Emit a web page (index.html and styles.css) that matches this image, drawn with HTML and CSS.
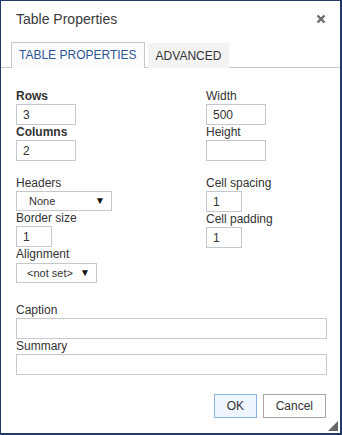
FILE: index.html
```html
<!DOCTYPE html>
<html lang="en">
<head>
  <meta charset="UTF-8">
  <title>Table Properties</title>
  <link rel="stylesheet" href="styles.css">
</head>
<body>
  <div class="dialog">
    <div class="head">
      <span class="title">Table Properties</span>
      <svg class="close" width="10" height="10" viewBox="0 0 10 10">
        <path d="M1.5 1.5 L8.5 8.5 M8.5 1.5 L1.5 8.5" stroke="#6a6a6a" stroke-width="2.4"/>
      </svg>
    </div>

    <div class="tabs">
      <span class="tab active">TABLE PROPERTIES</span>
      <span class="tab">ADVANCED</span>
    </div>

    <div class="panel">
      <div class="grid">
        <div class="col">
          <label class="bold">Rows</label>
          <input class="small" type="text" value="3">
          <label class="bold">Columns</label>
          <input class="small" type="text" value="2">
        </div>
        <div class="col">
          <label>Width</label>
          <input class="small" type="text" value="500">
          <label>Height</label>
          <input class="small" type="text" value="">
        </div>
      </div>

      <div class="grid sec2">
        <div class="col">
          <label>Headers</label>
          <div class="select headers">None<span class="arrow">&#9660;</span></div>
          <label>Border size</label>
          <input class="tiny" type="text" value="1">
          <label>Alignment</label>
          <div class="select align">&lt;not set&gt;<span class="arrow">&#9660;</span></div>
        </div>
        <div class="col">
          <label>Cell spacing</label>
          <input class="tiny" type="text" value="1">
          <label>Cell padding</label>
          <input class="tiny" type="text" value="1">
        </div>
      </div>

      <div class="col sec3">
        <label>Caption</label>
        <input class="wide" type="text" value="">
        <label>Summary</label>
        <input class="wide" type="text" value="">
      </div>

      <div class="foot">
        <button class="btn ok">OK</button>
        <button class="btn">Cancel</button>
      </div>
    </div>

    <span class="grip"></span>
  </div>
</body>
</html>
```

FILE: styles.css
```css
body {
  margin: 0;
  font-family: "Liberation Sans", Arial, sans-serif;
  font-size: 12px;
  color: #333;
  background: #fff;
}

.dialog {
  position: relative;
  box-sizing: border-box;
  width: 342px;
  height: 435px;
  border: 1px solid #1f3b66;
  border-right-width: 2px;
  border-bottom-width: 2px;
  background: #fff;
}

.head {
  display: flex;
  align-items: center;
  justify-content: space-between;
  height: 36px;
  padding: 0 14px 0 15px;
}

.title {
  font-size: 14px;
  color: #3a3a3a;
}

.close {
  display: block;
}

.tabs {
  display: flex;
  gap: 3px;
  margin-top: 5px;
  padding-left: 10px;
}

.tab {
  display: block;
  height: 24px;
  line-height: 24px;
  padding: 0 7px;
  border: 1px solid transparent;
  border-bottom: none;
  background: #f3f3f3;
  color: #333;
  margin-bottom: -1px;
}

.tab.active {
  border-color: #c8c8c8;
  background: #fbfbfb;
  color: #2b5797;
  height: 25px;
}

.tab:not(.active) {
  margin-top: 1px;
}

.panel {
  border-top: 1px solid #c8c8c8;
  padding: 21px 14px 0 15px;
}

.grid {
  display: grid;
  grid-template-columns: 190px 1fr;
}

.col {
  display: flex;
  flex-direction: column;
  align-items: flex-start;
}

label {
  display: block;
  line-height: 15px;
  height: 15px;
}

.bold {
  font-weight: bold;
}

input {
  box-sizing: border-box;
  height: 21px;
  border: 1px solid #c5c9ce;
  padding: 0 6px;
  font-family: inherit;
  font-size: 12px;
  color: #333;
  margin: 0;
}

.small { width: 60px; }
.tiny { width: 36px; }
.wide { width: 311px; }

.sec2 {
  margin-top: 15px;
}

.select {
  position: relative;
  box-sizing: border-box;
  height: 20px;
  line-height: 18px;
  border: 1px solid #c5c9ce;
  padding-left: 12px;
  font-size: 11px;
}

.headers { width: 96px; }
.align { width: 81px; padding-left: 10px; margin-top: 1px; }

.arrow {
  position: absolute;
  right: 6px;
  top: 0;
  font-size: 10px;
  color: #111;
}

.sec3 {
  margin-top: 20px;
}

.foot {
  display: flex;
  justify-content: flex-end;
  gap: 6px;
  margin-top: 19px;
}

.btn {
  box-sizing: border-box;
  height: 24px;
  padding: 0 12px;
  font-family: inherit;
  font-size: 12px;
  color: #333;
  background: #fff;
  border: 1px solid #a7a7a7;
}

.btn.ok {
  width: 43px;
  background: #f0f6ff;
  border-color: #8db4e6;
}

.grip {
  position: absolute;
  right: 2px;
  bottom: 2px;
  width: 0;
  height: 0;
  border-left: 10px solid transparent;
  border-bottom: 10px solid #666;
}
```
